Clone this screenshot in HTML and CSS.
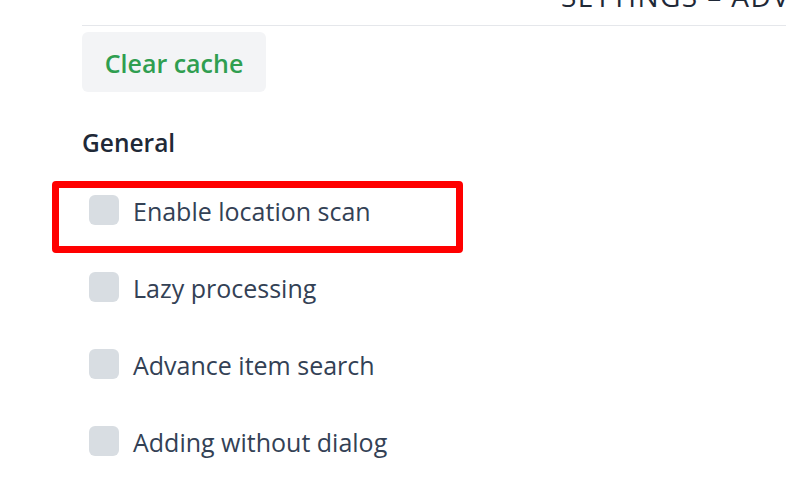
FILE: index.html
```html
<!DOCTYPE html>
<html>
<head>
<meta charset="utf-8">
<link rel="stylesheet" href="styles.css">
</head>
<body>
<div class="page">
  <header class="topbar"><h1 class="title">SETTINGS – ADVANCED</h1></header>
  <button class="btn" type="button">Clear cache</button>
  <h2 class="section">General</h2>
  <ul class="options">
    <li class="option"><span class="box"></span><span class="label">Enable location scan</span></li>
    <li class="option"><span class="box"></span><span class="label">Lazy processing</span></li>
    <li class="option"><span class="box"></span><span class="label">Advance item search</span></li>
    <li class="option"><span class="box"></span><span class="label">Adding without dialog</span></li>
  </ul>
</div>
<div class="highlight"></div>
</body>
</html>
```

FILE: styles.css
```css
html, body {
  margin: 0;
  padding: 0;
  background: #ffffff;
  width: 786px;
  height: 480px;
  overflow: hidden;
}
body {
  font-family: "Open Sans", "Noto Sans", sans-serif;
  color: #1f2937;
  position: relative;
}
.page {
  padding-left: 82px;
}
.topbar {
  height: 25px;
  border-bottom: 1px solid #e5e7eb;
  overflow: hidden;
}
.title {
  margin: -18px 0 0 0;
  padding-left: 479px;
  font-size: 28px;
  line-height: 28px;
  font-weight: 500;
  letter-spacing: 1.4px;
  white-space: nowrap;
  color: #1f2937;
}
.btn {
  display: flex;
  align-items: center;
  justify-content: center;
  margin-top: 6px;
  width: 184px;
  height: 60px;
  border: none;
  border-radius: 6px;
  background: #f3f4f6;
  color: #2f9e50;
  font-family: inherit;
  font-size: 25px;
  font-weight: 600;
  padding: 2px 0 0 0;
}
.section {
  margin: 36px 0 0 0;
  font-size: 24.5px;
  line-height: 30px;
  font-weight: 600;
  color: #1f2937;
}
.options {
  list-style: none;
  margin: 37px 0 0 7px;
  padding: 0;
  display: flex;
  flex-direction: column;
  gap: 47px;
}
.option {
  display: flex;
  align-items: center;
  gap: 14px;
  height: 30px;
}
.box {
  width: 30px;
  height: 30px;
  border-radius: 6px;
  background: #d8dde2;
  flex: none;
}
.label {
  font-size: 25px;
  color: #334155;
  position: relative;
  top: 1px;
}
.highlight {
  position: absolute;
  left: 52px;
  top: 181px;
  width: 411px;
  height: 72px;
  box-sizing: border-box;
  border: 7px solid #ff0000;
  border-radius: 4px;
}
```
